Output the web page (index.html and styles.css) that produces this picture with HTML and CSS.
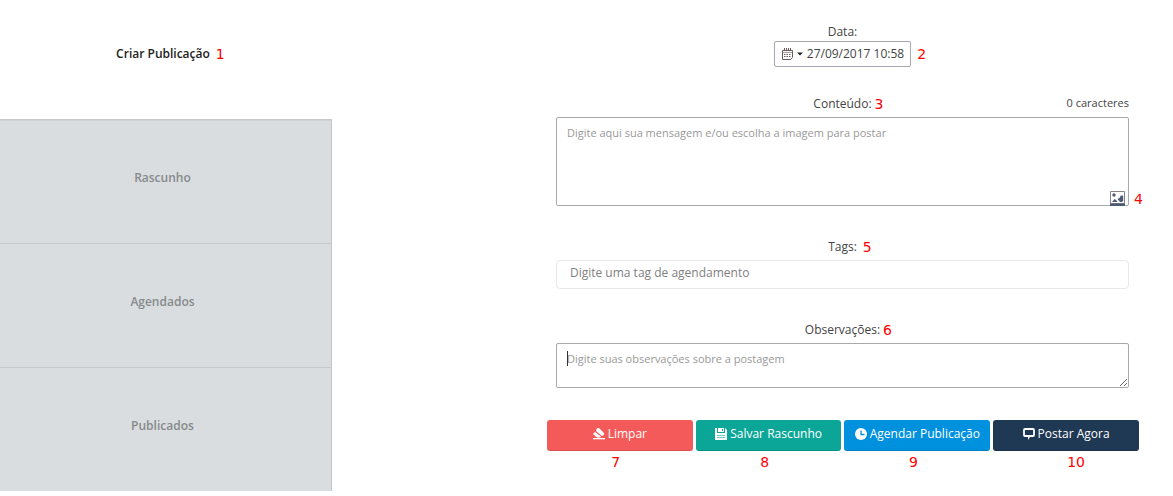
FILE: index.html
```html
<!DOCTYPE html>
<html lang="pt-BR">
<head>
<meta charset="utf-8">
<title>Criar Publicação</title>
<link rel="stylesheet" href="styles.css">
</head>
<body>
<div class="page">
  <nav class="tabs">
    <a class="tab tab-active" href="#criar"><span class="anchor">Criar Publicação<span class="mark mark-side">1</span></span></a>
    <a class="tab" href="#rascunho">Rascunho</a>
    <a class="tab" href="#agendados">Agendados</a>
    <a class="tab" href="#publicados">Publicados</a>
  </nav>
  <form class="composer">
    <div class="field field-date">
      <label class="label" for="data">Data:</label>
      <div class="anchor">
        <button class="date" id="data" type="button">
          <svg width="12" height="13" viewBox="0 0 12 13" fill="none" stroke="#6b5a5e"><path d="M1.5 2.5h10v7l-2 2h-8z"/><path d="M1 4.500h10" stroke-width=".6"/><path d="M3.500 0v3M5.500 0v3M7.500 0v3M9.500 0v3" stroke-width="1"/><path d="M3 6.500h7M3 8.500h7" stroke-dasharray="1.500 1"/></svg>
          <svg width="6" height="4" viewBox="0 0 6 4"><path d="M0 .5h6L3 3.500z" fill="#222"/></svg>
          <span>27/09/2017 10:58</span>
        </button>
        <span class="mark mark-side">2</span>
      </div>
    </div>

    <div class="field">
      <div class="label-row">
        <label class="label anchor" for="conteudo">Conteúdo:<span class="mark mark-near">3</span></label>
        <output class="count" for="conteudo">0 caracteres</output>
      </div>
      <div class="box">
        <textarea class="text text-message" id="conteudo" placeholder="Digite aqui sua mensagem e/ou escolha a imagem para postar"></textarea>
        <button class="image" type="button" aria-label="Escolher imagem">
          <svg width="15" height="15" viewBox="0 0 15 15"><path fill="#fff" stroke="#8b7f8a" d="M.5.5h14v12H.5z"/><path fill="#4d5c74" d="M0 12.500h15V15H0zM2 11l2.500-3L6 9l1.500 2zM7.500 8l2-1 1-2 1.500-.7 1.200.7v5l-1.200 1H10z"/><circle cx="4" cy="4" r="1.700" fill="#4d5c74"/></svg>
        </button>
        <span class="mark mark-image">4</span>
      </div>
    </div>

    <div class="field">
      <label class="label anchor" for="tags">Tags:<span class="mark mark-side">5</span></label>
      <input class="tags" id="tags" type="text" placeholder="Digite uma tag de agendamento">
    </div>

    <div class="field">
      <label class="label anchor" for="obs">Observações:<span class="mark mark-near">6</span></label>
      <div class="box">
        <textarea class="text text-notes" id="obs" placeholder="Digite suas observações sobre a postagem"></textarea>
        <span class="caret"></span>
      </div>
    </div>

    <div class="actions">
      <div class="action">
        <button class="btn btn-clear" type="reset"><svg width="12" height="13" viewBox="0 0 12 13" fill="#fff"><path d="M4 1h2l5 5v2l-2 1-6-5z"/><path d="M2 5l6 4.500L7 10.500H4L0 7z"/><path d="M0 11h12v1.300H0z"/></svg>Limpar</button>
        <span class="mark">7</span>
      </div>
      <div class="action">
        <button class="btn btn-save" type="button"><svg width="12" height="13" viewBox="0 0 12 13"><path fill="#fff" d="M0 1h10l2 2v10H0z"/><path fill="#0ba698" d="M2 1h1v4H2zM9 1h1v4H9zM7 2h1v2H7zM2 5h8v1H2z"/><path fill="#0ba698" opacity=".6" d="M2 8h8v1H2zM2 10h8v1H2z"/></svg>Salvar Rascunho</button>
        <span class="mark">8</span>
      </div>
      <div class="action">
        <button class="btn btn-schedule" type="button"><svg width="12" height="13" viewBox="0 0 12 13"><circle cx="6" cy="7" r="6" fill="#fff"/><path d="M6 3.500v4h3.500" fill="none" stroke="#0091de" stroke-width="1.300"/></svg>Agendar Publicação</button>
        <span class="mark">9</span>
      </div>
      <div class="action action-last">
        <button class="btn btn-post" type="submit"><svg width="12" height="13" viewBox="0 0 12 13"><rect x="1" y="2" width="10" height="7" rx="1" fill="none" stroke="#fff" stroke-width="1.800"/><path fill="#fff" d="M3 9h6l-2 1-2 3V10z"/></svg>Postar Agora</button>
        <span class="mark">10</span>
      </div>
    </div>
  </form>
</div>
</body>
</html>
```
FILE: styles.css
```css
* { box-sizing: border-box; }
body {
  margin: 0;
  background: #fff;
  color: #444;
  font: 12px/18px "Open Sans", "Noto Sans", sans-serif;
}
button, input, textarea { font: inherit; margin: 0; }
svg { flex: none; }
.page { display: flex; align-items: flex-start; }

.tabs { flex: 0 0 28.3%; }
.tab {
  display: flex;
  align-items: center;
  justify-content: center;
  height: 124px;
  padding: 0 6px 8px 0;
  background: #d9dddf;
  border-right: 1px solid #c3c7ca;
  border-bottom: 1px solid #c6cacb;
  color: #868a8c;
  font-weight: 600;
  text-decoration: none;
}
.tab:last-child { height: 123px; border-bottom: 0; }
.tab-active {
  height: 120px;
  padding-bottom: 12px;
  background: #fff;
  border-right: 0;
  color: #222;
}
.tab-active + .tab { box-shadow: inset 0 1px #ced2d3; }

.composer {
  flex: 1;
  display: flex;
  flex-direction: column;
  gap: 32px;
  padding: 23px 34px 0 215px;
}
.field { display: flex; flex-direction: column; align-items: center; gap: 4px; padding: 0 10px 0 9px; }
.field-date { gap: 0; margin-bottom: -4px; }
.anchor { position: relative; }
.label-row { display: grid; grid-template-columns: 1fr auto 1fr; width: 100%; }
.label-row .label { grid-column: 2; }
.count { justify-self: end; font-size: 11px; line-height: 16px; }

.mark {
  color: #f00;
  font: 14px/22px "DejaVu Sans", sans-serif;
  text-align: center;
}
.anchor .mark, .mark-image { position: absolute; top: 50%; left: 100%; margin: -11px 0 0 6px; }
.anchor .mark-near { margin-left: 3px; }
.mark-image { margin: 0 0 0 5px; top: auto; bottom: -4px; }

.date {
  display: flex;
  align-items: center;
  gap: 4px;
  height: 26px;
  padding: 0 6px;
  background: #fff;
  border: 1px solid #aaa5b2;
  border-radius: 2px;
  color: #444;
}
.box { position: relative; width: 100%; }
.text {
  display: block;
  width: 100%;
  padding: 7px 10px;
  background: #fff;
  border: 1px solid #a9a9a9;
  border-radius: 2px;
  color: #444;
  font-size: 11px;
  line-height: 16px;
}
.text::placeholder { color: #999; }
.text-message { height: 89px; resize: none; }
.text-notes { height: 45px; resize: vertical; }
.image { position: absolute; right: 4px; bottom: 0; display: block; padding: 0; border: 0; background: none; }
.image svg { display: block; }
.caret { position: absolute; left: 11px; top: 8px; width: 1px; height: 15px; background: #333; }
.tags {
  width: 100%;
  height: 29px;
  padding: 0 13px 4px;
  background: #fff;
  border: 1px solid #e6e9e9;
  border-radius: 4px;
  color: #444;
}
.tags::placeholder { color: #808080; }

.actions { display: grid; grid-template-columns: repeat(4, 1fr); gap: 3px; }
.action { display: flex; flex-direction: column; align-items: center; }
.action .mark { padding-right: 8px; }
.action-last .mark { padding: 0 0 0 20px; }
.btn {
  display: flex;
  align-items: center;
  justify-content: center;
  gap: 3px;
  width: 100%;
  height: 31px;
  padding: 0 0 3px;
  border: 0;
  border-bottom: 1px solid rgba(0, 0, 0, .12);
  border-radius: 3px;
  color: #fff;
}
.btn-clear { background: #f55a5a; }
.btn-save { background: #0ba698; }
.btn-schedule { background: #0091de; }
.btn-post { background: #1f3853; }
```
